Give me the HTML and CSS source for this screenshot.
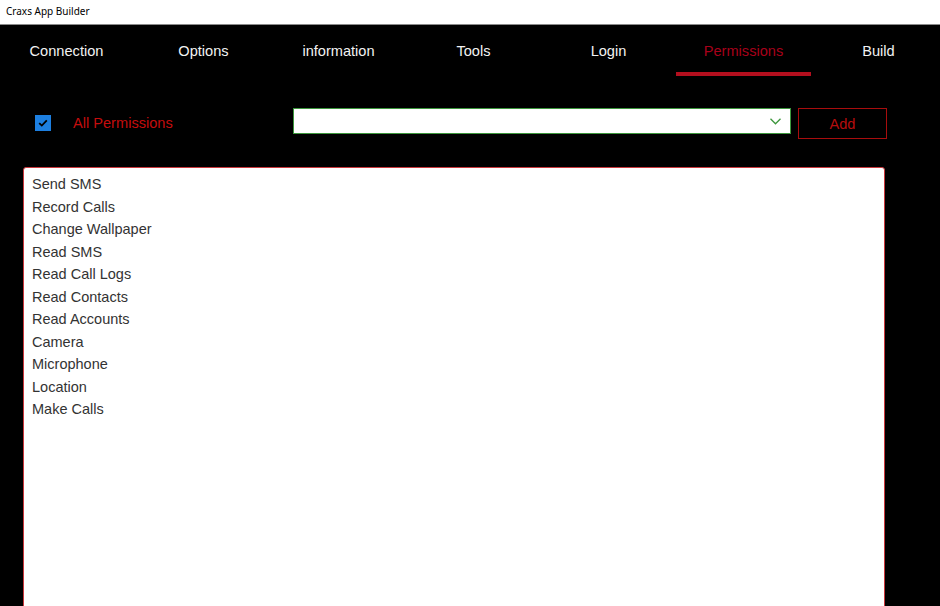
FILE: index.html
```html
<!DOCTYPE html>
<html lang="en">
<head>
    <meta charset="UTF-8">
    <title>Craxs App Builder</title>
    <link rel="stylesheet" href="styles.css">
</head>
<body>
    <div class="title-bar">Craxs App Builder</div>

    <div class="tabs">
        <div class="tab">Connection</div>
        <div class="tab">Options</div>
        <div class="tab">information</div>
        <div class="tab">Tools</div>
        <div class="tab">Login</div>
        <div class="tab active">Permissions</div>
        <div class="tab">Build</div>
    </div>

    <div class="perm-row">
        <div class="check-box">
            <svg width="16" height="16" viewBox="0 0 16 16">
                <path d="M4.2 8.2 L6.8 10.6 L11.8 5.4" fill="none" stroke="#000" stroke-width="1.8"/>
            </svg>
        </div>
        <div class="check-label">All Permissions</div>
        <div class="combo">
            <svg class="chevron" width="11" height="7" viewBox="0 0 11 7">
                <path d="M0.5 0.8 L5.5 5.8 L10.5 0.8" fill="none" stroke="#3c963c" stroke-width="1.3"/>
            </svg>
        </div>
        <button class="add-btn">Add</button>
    </div>

    <div class="perm-list">
        <div class="perm-item">Send SMS</div>
        <div class="perm-item">Record Calls</div>
        <div class="perm-item">Change Wallpaper</div>
        <div class="perm-item">Read SMS</div>
        <div class="perm-item">Read Call Logs</div>
        <div class="perm-item">Read Contacts</div>
        <div class="perm-item">Read Accounts</div>
        <div class="perm-item">Camera</div>
        <div class="perm-item">Microphone</div>
        <div class="perm-item">Location</div>
        <div class="perm-item">Make Calls</div>
    </div>
</body>
</html>
```

FILE: styles.css
```css
body {
    margin: 0;
    background-color: #000;
    font-family: 'Liberation Sans', Arial, sans-serif;
    height: 606px;
    overflow: hidden;
}
.title-bar {
    background-color: #fff;
    height: 25px;
    border-bottom: 1px solid #8a8a8a;
    box-sizing: border-box;
    padding-left: 6px;
    font-family: 'Noto Sans', sans-serif;
    font-size: 10px;
    line-height: 23px;
    color: #000;
}
.tabs {
    display: flex;
    padding-left: 1px;
    margin-top: 1px;
}
.tab {
    width: 135px;
    flex-shrink: 0;
    text-align: center;
    color: #f2f2f2;
    font-size: 14.6px;
    line-height: 20px;
    padding-top: 15px;
    height: 31px;
    border-bottom: 4px solid transparent;
}
.tab:first-child {
    text-indent: -4px;
}
.tab.active {
    color: #a8001a;
    border-bottom-color: #b30f1e;
}
.perm-row {
    display: flex;
    align-items: flex-start;
    margin-top: 32px;
    padding-left: 35px;
}
.check-box {
    width: 16px;
    height: 16px;
    margin-top: 7px;
    background-color: #1d7fe0;
    flex-shrink: 0;
}
.check-box svg {
    display: block;
}
.check-label {
    width: 220px;
    margin-left: 22px;
    color: #c40d0d;
    font-size: 14.6px;
    line-height: 20px;
    margin-top: 5px;
}
.combo {
    width: 498px;
    height: 26px;
    box-sizing: border-box;
    border: 1px solid #3c963c;
    background-color: #fff;
    display: flex;
    justify-content: flex-end;
    align-items: center;
    padding-right: 9px;
}
.add-btn {
    width: 89px;
    height: 31px;
    margin-left: 7px;
    background-color: #000;
    border: 1px solid #a80d0d;
    color: #b50d0d;
    font-family: 'Liberation Sans', Arial, sans-serif;
    font-size: 14.6px;
    padding: 0;
}
.perm-list {
    margin-top: 28px;
    margin-left: 23px;
    width: 862px;
    height: 460px;
    box-sizing: border-box;
    background-color: #fff;
    border: 1px solid #c9383c;
    border-radius: 3px 3px 0 0;
    padding: 5px 0 0 8px;
}
.perm-item {
    font-size: 14.5px;
    line-height: 22.5px;
    color: #333;
}
```
